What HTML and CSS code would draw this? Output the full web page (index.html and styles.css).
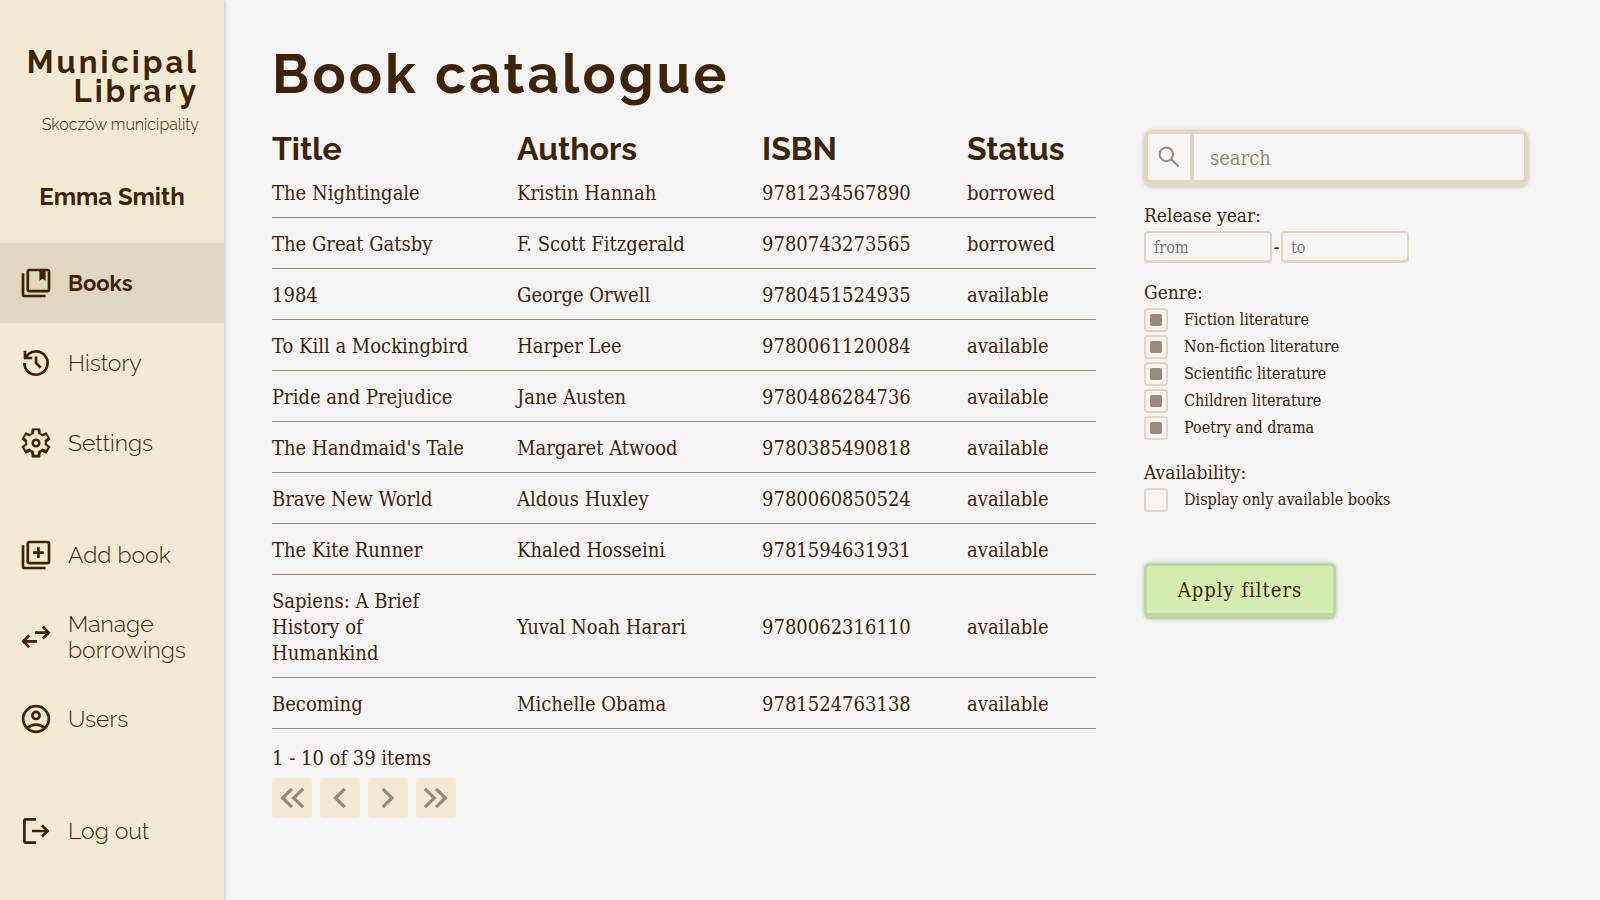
FILE: index.html
```html
<!DOCTYPE html>
<html lang="en">
<head>
<meta charset="utf-8">
<meta name="viewport" content="width=device-width, initial-scale=1">
<title>Book catalogue - Municipal Library</title>
<link rel="stylesheet" href="styles.css">
</head>
<body>
<div class="app">
  <aside class="sidebar">
    <header class="brand">
      <div class="brand-name">Municipal<br>Library</div>
      <div class="brand-place">Skoczów municipality</div>
    </header>
    <div class="user-name">Emma Smith</div>
    <nav class="nav">
      <div class="nav-group">
        <a class="nav-item nav-item-active" href="#books" aria-current="page">
          <svg class="icon" viewBox="0 0 34 34" aria-hidden="true"><rect x="8.8" y="4" width="21.2" height="21.2" rx="1.6"/><path d="M4 7.2V28.4Q4 30 5.6 30H26.6"/><path class="solid" d="M20.4 4h6.2v10.8l-3.1-2.1-3.1 2.1z"/></svg>
          <span>Books</span>
        </a>
        <a class="nav-item" href="#history">
          <svg class="icon" viewBox="0 0 34 34" aria-hidden="true"><path d="M5.4 17A11.6 11.6 0 1 0 7 11.2M6 4.8V12H13.2M17 10.4V17l4.8 4.8"/></svg>
          <span>History</span>
        </a>
        <a class="nav-item" href="#settings">
          <svg class="icon" viewBox="0 -960 960 960" aria-hidden="true"><path class="gear" d="m370-80-16-128q-13-5-24.500-12T307-235l-119 50L78-375l103-78q-1-7-1-13.500v-27q0-6.500 1-13.500L78-585l110-190 119 50q11-8 23-15t24-12l16-128h220l16 128q13 5 24.500 12t22.500 15l119-50 110 190-103 78q1 7 1 13.500v27q0 6.500-2 13.500l103 78-110 190-118-50q-11 8-23 15t-24 12L590-80H370Zm55-60h110l14-112q35-9 63-25.500t53-41.500l103 44 52-90-91-68q6-16 8-31t2-31q0-17-2-31.500t-8-29.500l92-69-52-90-105 44q-21-23-52-42t-64-25l-13-112H425l-13 111q-35 7-64 24t-54 43l-103-43-52 90 90 67q-6 16-8 31.500t-2 32.500q0 16 2 31t8 31l-90 68 52 90 103-43q24 24 53 41t65 25l13 111Z"/><circle cx="480" cy="-480" r="94" stroke-width="72"/></svg>
          <span>Settings</span>
        </a>
      </div>
      <div class="nav-group">
        <a class="nav-item" href="#add-book">
          <svg class="icon" viewBox="0 0 34 34" aria-hidden="true"><rect x="8.8" y="4" width="21.2" height="21.2" rx="1.6"/><path d="M4 7.2V28.4Q4 30 5.6 30H26.6M19.400 9.200v10.800M14 14.600h10.800"/></svg>
          <span>Add book</span>
        </a>
        <a class="nav-item" href="#borrowings">
          <svg class="icon" viewBox="0 0 34 34" aria-hidden="true"><path d="M16 12.700H29.600M23.800 6.800l5.900 5.900-5.900 5.900M18 21.300H4.400M10.200 15.400l-5.900 5.900 5.900 5.900"/></svg>
          <span>Manage borrowings</span>
        </a>
        <a class="nav-item" href="#users">
          <svg class="icon" viewBox="0 0 34 34" aria-hidden="true"><circle cx="17" cy="17" r="12.800"/><circle cx="17" cy="13.400" r="3.600"/><path d="M8.200 26.200Q12 22.700 17 22.700T25.800 26.200"/></svg>
          <span>Users</span>
        </a>
      </div>
      <div class="nav-group">
        <a class="nav-item" href="#logout">
          <svg class="icon" viewBox="0 0 34 34" aria-hidden="true"><path d="M17 5.400H7Q5.400 5.400 5.400 7V27Q5.400 28.600 7 28.600H17M13 17H28.600M23 11.400l5.600 5.600-5.600 5.600"/></svg>
          <span>Log out</span>
        </a>
      </div>
    </nav>
  </aside>

  <main class="main">
    <h1 class="page-title">Book catalogue</h1>
    <div class="content">
      <section class="catalogue">
        <table class="books">
          <colgroup><col class="col-title"><col class="col-authors"><col class="col-isbn"><col class="col-status"></colgroup>
          <thead>
            <tr><th scope="col">Title</th><th scope="col">Authors</th><th scope="col">ISBN</th><th scope="col">Status</th></tr>
          </thead>
          <tbody>
            <tr><td>The Nightingale</td><td>Kristin Hannah</td><td>9781234567890</td><td>borrowed</td></tr>
            <tr><td>The Great Gatsby</td><td>F. Scott Fitzgerald</td><td>9780743273565</td><td>borrowed</td></tr>
            <tr><td>1984</td><td>George Orwell</td><td>9780451524935</td><td>available</td></tr>
            <tr><td>To Kill a Mockingbird</td><td>Harper Lee</td><td>9780061120084</td><td>available</td></tr>
            <tr><td>Pride and Prejudice</td><td>Jane Austen</td><td>9780486284736</td><td>available</td></tr>
            <tr><td>The Handmaid's Tale</td><td>Margaret Atwood</td><td>9780385490818</td><td>available</td></tr>
            <tr><td>Brave New World</td><td>Aldous Huxley</td><td>9780060850524</td><td>available</td></tr>
            <tr><td>The Kite Runner</td><td>Khaled Hosseini</td><td>9781594631931</td><td>available</td></tr>
            <tr><td>Sapiens: A Brief<br>History of<br>Humankind</td><td>Yuval Noah Harari</td><td>9780062316110</td><td>available</td></tr>
            <tr><td>Becoming</td><td>Michelle Obama</td><td>9781524763138</td><td>available</td></tr>
          </tbody>
        </table>
        <div class="page-count">1 - 10 of 39 items</div>
        <div class="pager">
          <button class="pager-button" type="button" aria-label="First page"><svg class="pager-icon" viewBox="0 0 40 40" aria-hidden="true"><path d="M20 10.800L10.600 20l9.400 9.200M31 10.800L21.600 20l9.400 9.200"/></svg></button>
          <button class="pager-button" type="button" aria-label="Previous page"><svg class="pager-icon" viewBox="0 0 40 40" aria-hidden="true"><path d="M24.800 10.800L15.400 20l9.400 9.200"/></svg></button>
          <button class="pager-button" type="button" aria-label="Next page"><svg class="pager-icon" viewBox="0 0 40 40" aria-hidden="true"><path d="M14.700 10.800L24.100 20l-9.400 9.200"/></svg></button>
          <button class="pager-button" type="button" aria-label="Last page"><svg class="pager-icon" viewBox="0 0 40 40" aria-hidden="true"><path d="M9 10.800L18.400 20 9 29.200M20 10.800L29.400 20 20 29.200"/></svg></button>
        </div>
      </section>

      <form class="filters">
        <div class="search">
          <button class="search-button" type="button" aria-label="Search"><svg class="search-icon" viewBox="0 0 24 24" aria-hidden="true"><circle cx="9.300" cy="9.300" r="6.800"/><path d="M14.200 14.200l7.300 7.300"/></svg></button>
          <input class="search-input" type="text" placeholder="search" aria-label="search">
        </div>
        <fieldset class="filter-group">
          <legend class="filter-title">Release year:</legend>
          <div class="years">
            <input class="year-input" type="text" placeholder="from" aria-label="Release year from">
            <span class="dash">-</span>
            <input class="year-input" type="text" placeholder="to" aria-label="Release year to">
          </div>
        </fieldset>
        <fieldset class="filter-group">
          <legend class="filter-title">Genre:</legend>
          <div class="checks">
            <label class="check"><input class="check-box" type="checkbox" checked>Fiction literature</label>
            <label class="check"><input class="check-box" type="checkbox" checked>Non-fiction literature</label>
            <label class="check"><input class="check-box" type="checkbox" checked>Scientific literature</label>
            <label class="check"><input class="check-box" type="checkbox" checked>Children literature</label>
            <label class="check"><input class="check-box" type="checkbox" checked>Poetry and drama</label>
          </div>
        </fieldset>
        <fieldset class="filter-group">
          <legend class="filter-title">Availability:</legend>
          <div class="checks">
            <label class="check"><input class="check-box" type="checkbox">Display only available books</label>
          </div>
        </fieldset>
        <button class="apply" type="button">Apply filters</button>
      </form>
    </div>
  </main>
</div>
</body>
</html>
```

FILE: styles.css
```css
:root {
  --ink: #3f2305;
  --muted: #998a7a;
  --sand: #f2ead3;
  --sand-dark: #dfd7bf;
  --paper: #f5f5f5;
  --heading: Raleway, Lato, sans-serif;
  --text: "Roboto Slab", "DejaVu Serif Condensed", "DejaVu Serif", serif;
}

* {
  box-sizing: border-box;
}

body {
  margin: 0;
  background: var(--paper);
  color: var(--ink);
  font-family: var(--text);
  font-size: 20px;
}

button,
input {
  font-family: inherit;
  color: inherit;
}

.app {
  display: flex;
  min-height: 100vh;
}

/* Sidebar */
.sidebar {
  flex: 0 0 224px;
  background: var(--sand);
  box-shadow: 0 0 4px rgba(0, 0, 0, 0.3);
  font-family: var(--heading);
}

.brand {
  padding: 48px 25px 0 0;
  text-align: right;
}

.brand-name {
  font-size: 31px;
  line-height: 29px;
  font-weight: 700;
  letter-spacing: 3px;
}

.brand-place {
  margin-top: 9px;
  font-size: 16px;
  line-height: 20px;
  font-weight: 300;
}

.user-name {
  margin: 46px 0 30px;
  text-align: center;
  font-size: 24px;
  line-height: 32px;
  font-weight: 700;
}

.nav {
  display: flex;
  flex-direction: column;
  gap: 32px;
}

.nav-item {
  display: flex;
  align-items: center;
  gap: 15px;
  min-height: 80px;
  padding: 16px 16px 16px 19px;
  color: inherit;
  font-size: 23px;
  line-height: 26px;
  font-weight: 300;
  text-decoration: none;
}

.nav-item-active {
  background: var(--sand-dark);
  font-size: 22px;
  font-weight: 700;
}

.icon {
  flex: none;
  width: 34px;
  height: 34px;
  fill: none;
  stroke: currentColor;
  stroke-width: 2.7;
}

.icon .solid {
  fill: currentColor;
  stroke: none;
}

.icon .gear {
  fill: currentColor;
  stroke-width: 18;
}

/* Catalogue */
.main {
  flex: 1;
  min-width: 0;
  padding: 40px 72px 40px 48px;
}

.page-title {
  margin: 0 0 22px;
  font-family: var(--heading);
  font-size: 55px;
  line-height: 68px;
  font-weight: 700;
  letter-spacing: 3px;
}

.content {
  display: flex;
  align-items: flex-start;
  gap: 48px;
}

.catalogue {
  flex: 1;
  min-width: 0;
}

.books {
  width: 100%;
  table-layout: fixed;
  border-collapse: separate;
  border-spacing: 0;
  text-align: left;
}

.col-title,
.col-authors {
  width: 245px;
}

.col-isbn {
  width: 205px;
}

.books th {
  padding: 0;
  font-family: var(--heading);
  font-size: 32px;
  line-height: 37px;
  font-weight: 700;
}

.books td {
  padding: 13px 32px 11px 0;
  border-bottom: 1px solid var(--muted);
  line-height: 26px;
}

.books td:last-child {
  padding-right: 0;
}

.page-count {
  margin-top: 16px;
  line-height: 26px;
}

.pager {
  display: flex;
  gap: 8px;
  margin-top: 7px;
}

.pager-button {
  width: 40px;
  height: 40px;
  padding: 0;
  border: 0;
  border-radius: 4px;
  background: var(--sand);
  color: var(--muted);
}

.pager-icon {
  display: block;
  fill: none;
  stroke: currentColor;
  stroke-width: 3.2;
}

/* Filters */
.filters {
  flex: 0 0 384px;
}

.search {
  display: flex;
  height: 56px;
  margin-bottom: 15px;
  border: 4px solid var(--sand-dark);
  border-bottom-width: 6px;
  border-radius: 8px;
  box-shadow: 0 1px 4px rgba(0, 0, 0, 0.25);
}

.search-button {
  display: flex;
  align-items: center;
  justify-content: center;
  flex: 0 0 46px;
  padding: 0;
  border: 0;
  border-right: 4px solid var(--sand-dark);
  background: none;
  color: var(--muted);
}

.search-icon {
  width: 24px;
  height: 24px;
  fill: none;
  stroke: currentColor;
  stroke-width: 2;
}

.search-input {
  flex: 1;
  min-width: 0;
  padding: 2px 16px 0;
  border: 0;
  background: none;
  font-size: 20px;
}

.search-input::placeholder {
  color: var(--muted);
}

.filter-group {
  margin: 0 0 15px;
  padding: 0;
  border: 0;
}

.filter-title {
  padding: 0 0 2px;
  font-size: 19px;
  line-height: 28px;
}

.years {
  display: flex;
  align-items: center;
  gap: 1px;
}

.year-input {
  width: 128px;
  height: 32px;
  padding: 2px 8px 0;
  border: 2px solid var(--sand-dark);
  border-bottom-width: 3px;
  border-radius: 4px;
  background: none;
  font-size: 16px;
}

.dash {
  width: 7px;
  text-align: center;
}

.checks {
  display: flex;
  flex-direction: column;
  gap: 3px;
  padding-bottom: 3px;
}

.check {
  display: flex;
  align-items: center;
  gap: 16px;
  font-size: 16px;
  line-height: 24px;
}

.check-box {
  display: grid;
  place-items: center;
  appearance: none;
  width: 24px;
  height: 24px;
  margin: 0;
  border: 2px solid var(--sand-dark);
  border-radius: 4px;
}

.check-box:checked::before {
  content: "";
  width: 12px;
  height: 12px;
  border-radius: 2px;
  background: var(--muted);
}

.apply {
  width: 192px;
  height: 56px;
  margin-top: 33px;
  padding: 0;
  border: 3px solid #bfd79f;
  border-bottom-width: 6px;
  border-radius: 6px;
  background: #d4edb0;
  box-shadow: 0 0 4px rgba(0, 0, 0, 0.25);
  font-size: 20px;
  letter-spacing: 1px;
}
```
